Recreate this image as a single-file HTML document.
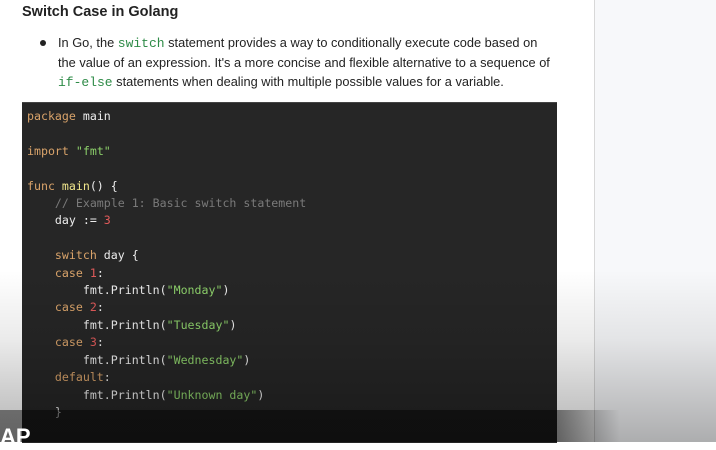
<!DOCTYPE html>
<html><head><style>
body{margin:0;width:716px;height:442px;overflow:hidden;position:relative;background:#fff;font-family:"Liberation Sans",Arial,sans-serif}
.right{position:absolute;left:594px;top:0;width:122px;height:442px;background:#f7f8fa;border-left:1px solid #d8d8d8}
h1{position:absolute;left:22px;top:4px;margin:0;font-size:14.5px;font-weight:bold;color:#222}
.b{position:absolute;left:58px;top:33px;white-space:nowrap;font-size:12.8px;line-height:19px;color:#222}
.dot{position:absolute;left:40px;top:40px;width:6px;height:6px;border-radius:50%;background:#222}
.g{color:#2e8b47;font-family:"Liberation Mono",monospace;font-size:13px}
.code{position:absolute;left:22px;top:102px;width:535px;height:340px;background:#262626;border-top:1px solid #444;overflow:hidden}
pre{margin:0;position:absolute;left:5px;top:5px;font-family:"DejaVu Sans Mono",monospace;font-size:11.6px;line-height:17.4px;color:#ececec}
.k{color:#d9a36a}.n{color:#e05a5a}.s{color:#8ccf6a}.c{color:#7a7a7a}
.shade{position:absolute;left:0;top:270px;width:716px;height:172px;background:linear-gradient(to bottom,rgba(0,0,0,0),rgba(0,0,0,0.08) 40%,rgba(0,0,0,0.3))}
.band{position:absolute;left:0;top:410px;width:620px;height:32px;background:linear-gradient(to right,rgba(0,0,0,0.45) 90%,rgba(0,0,0,0))}
.ap{position:absolute;left:0;top:424px;color:#fff;font-weight:bold;font-size:22px}
</style></head><body>
<div class="right"></div>
<h1>Switch Case in Golang</h1>
<div class="dot"></div>
<div class="b">In Go, the <span class="g">switch</span> statement provides a way to conditionally execute code based on<br>the value of an expression. It's a more concise and flexible alternative to a sequence of<br><span class="g">if-else</span> statements when dealing with multiple possible values for a variable.</div>
<div class="code"><pre><span class="k">package</span> main

<span class="k">import</span> <span class="s">"fmt"</span>

<span class="k">func</span> <span style="color:#f0e68c">main</span>() {
    <span class="c">// Example 1: Basic switch statement</span>
    day := <span class="n">3</span>

    <span class="k">switch</span> day {
    <span class="k">case</span> <span class="n">1</span>:
        fmt.Println(<span class="s">"Monday"</span>)
    <span class="k">case</span> <span class="n">2</span>:
        fmt.Println(<span class="s">"Tuesday"</span>)
    <span class="k">case</span> <span class="n">3</span>:
        fmt.Println(<span class="s">"Wednesday"</span>)
    <span class="k">default</span>:
        fmt.Println(<span class="s">"Unknown day"</span>)
    }
</pre></div>
<div class="shade"></div>
<div class="band"></div>
<div class="ap">AP</div>
</body></html>
